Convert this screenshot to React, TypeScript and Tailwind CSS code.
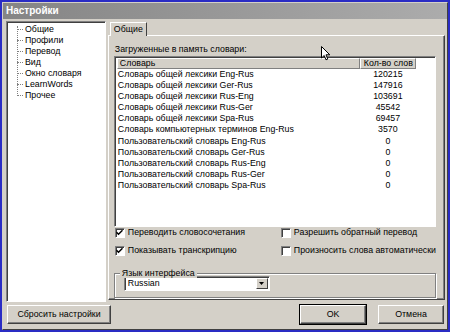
import React from "react";

// Settings dialog, classic Windows look

const TREE = ["Общие", "Профили", "Перевод", "Вид", "Окно словаря", "LearnWords", "Прочее"];

const DICTS: [string, string][] = [
  ["Словарь общей лексики Eng-Rus", "120215"],
  ["Словарь общей лексики Ger-Rus", "147916"],
  ["Словарь общей лексики Rus-Eng", "103691"],
  ["Словарь общей лексики Rus-Ger", "45542"],
  ["Словарь общей лексики Spa-Rus", "69457"],
  ["Словарь компьютерных терминов Eng-Rus", "3570"],
  ["Пользовательский словарь Eng-Rus", "0"],
  ["Пользовательский словарь Ger-Rus", "0"],
  ["Пользовательский словарь Rus-Eng", "0"],
  ["Пользовательский словарь Rus-Ger", "0"],
  ["Пользовательский словарь Spa-Rus", "0"],
];

function CheckBox({ checked, label }: { checked?: boolean; label: string }) {
  return (
    <div className="flex items-center gap-[3px] h-[12px] whitespace-nowrap">
      <div className="w-[10px] h-[10px] shrink-0 bg-white border border-t-[#808080] border-l-[#808080] border-b-white border-r-white flex items-center justify-center shadow-[inset_1px_1px_0_#404040]">
        {checked && (
          <svg width="7" height="7" viewBox="0 0 7 7">
            <path d="M0.5 3.2 L2.5 5.2 L6.5 1.2" stroke="#000" strokeWidth="1.5" fill="none" />
          </svg>
        )}
      </div>
      <span>{label}</span>
    </div>
  );
}

function Button({ children, width, bold }: { children: React.ReactNode; width: string; bold?: boolean }) {
  return (
    <div
      className={`${width} h-[19px] flex items-center justify-center bg-[#d4d0c8] border border-t-white border-l-white border-b-[#404040] border-r-[#404040] shadow-[inset_-1px_-1px_0_#808080] ${
        bold ? "outline outline-1 outline-black" : ""
      }`}
    >
      {children}
    </div>
  );
}

export default function App() {
  return (
    <div
      className="w-[450px] h-[332px] bg-[#2a2cc4] p-[2px] text-[8.8px] text-black leading-none relative"
      style={{ fontFamily: '"Liberation Sans", Arial, sans-serif' }}
    >
      <div className="w-full h-full bg-[#d4d0c8] border border-t-[#d4d0c8] border-l-[#d4d0c8] border-b-[#404040] border-r-[#404040] flex flex-col">
        {/* Title bar */}
        <div className="h-[16px] bg-gradient-to-r from-[#858585] to-[#acacac] flex items-center pl-[3px] text-white font-bold text-[10px]">
          Настройки
        </div>

        <div className="flex flex-1 pt-[2px] pl-[3px] pr-[2px] gap-[2px]">
          {/* Tree */}
          <div className="w-[104px] h-[281px] bg-white border border-t-[#808080] border-l-[#808080] border-b-white border-r-white shadow-[inset_1px_1px_0_#404040] pl-[10px] pt-[2px] relative">
            <div className="absolute left-[10px] top-[4px] h-[68px] border-l border-dotted border-[#808080]" />
            {TREE.map((t) => (
              <div key={t} className="flex items-center h-[11px] whitespace-nowrap">
                <div className="w-[6px] border-t border-dotted border-[#808080]" />
                <span className="ml-[2px]">{t}</span>
              </div>
            ))}
          </div>

          {/* Tabs */}
          <div className="flex flex-col flex-1">
            <div className="flex h-[14px] items-end pl-[2px]">
              <div className="h-[14px] px-[3px] flex items-center bg-[#d4d0c8] border-t border-l border-t-white border-l-white border-r border-r-[#404040] relative top-[1px] z-10">
                Общие
              </div>
            </div>
            <div className="h-[265px] border border-t-white border-l-white border-b-[#404040] border-r-[#404040] shadow-[inset_-1px_-1px_0_#808080] pl-[5px] pr-[8px] pt-[9px] flex flex-col">
              <div className="mb-[2px] pl-[1px] whitespace-nowrap">Загруженные в память словари:</div>
              {/* List view */}
              <div className="h-[171px] bg-white border border-t-[#808080] border-l-[#808080] border-b-white border-r-white shadow-[inset_1px_1px_0_#404040] p-[1px] pl-[2px]">
                <div className="flex h-[11px] whitespace-nowrap">
                  <div className="w-[243px] h-[11px] bg-[#d4d0c8] border border-t-white border-l-white border-b-[#808080] border-r-[#808080] flex items-center pl-[2px]">
                    Словарь
                  </div>
                  <div className="w-[56px] h-[11px] bg-[#d4d0c8] border border-t-white border-l-white border-b-[#808080] border-r-[#808080] flex items-center pl-[3px]">
                    Кол-во слов
                  </div>
                </div>
                <div>
                  {DICTS.map(([name, count]) => (
                    <div key={name} className="flex h-[11.1px] items-center whitespace-nowrap">
                      <div className="w-[243px] pl-[1px]">{name}</div>
                      <div className="w-[56px] text-center">{count}</div>
                    </div>
                  ))}
                </div>
              </div>

              <div className="grid grid-cols-[166px_1fr] gap-y-[6px] mt-0 pl-[1px]">
                <CheckBox checked label="Переводить словосочетания" />
                <CheckBox label="Разрешить обратный перевод" />
                <CheckBox checked label="Показывать транскрипцию" />
                <CheckBox label="Произносить слова автоматически" />
              </div>

              {/* Group box */}
              <div className="mt-[16px] h-[25px] border border-[#808080] shadow-[1px_1px_0_white,inset_1px_1px_0_white] relative pl-[9px] pt-[2px]">
                <span className="absolute left-[5px] top-[-5px] bg-[#d4d0c8] px-[2px] whitespace-nowrap">Язык интерфейса</span>
                <div className="w-[146px] h-[15px] bg-white border border-t-[#808080] border-l-[#808080] border-b-white border-r-white shadow-[inset_1px_1px_0_#404040] flex items-center justify-between pl-[3px] pr-[1px]">
                  <span>Russian</span>
                  <div className="w-[12px] h-[11px] bg-[#d4d0c8] border border-t-white border-l-white border-b-[#404040] border-r-[#404040] flex items-center justify-center">
                    <svg width="5" height="3" viewBox="0 0 5 3">
                      <path d="M0 0 H5 L2.5 3 Z" fill="#000" />
                    </svg>
                  </div>
                </div>
              </div>
            </div>
          </div>
        </div>

        {/* Bottom buttons */}
        <div className="flex items-center h-[27px] pl-[4px] pr-[3px] pb-[3px]">
          <Button width="w-[104px]">Сбросить настройки</Button>
          <div className="flex-1" />
          <Button width="w-[66px]" bold>
            OK
          </Button>
          <div className="w-[12px]" />
          <Button width="w-[66px]">Отмена</Button>
        </div>
      </div>

      {/* Mouse pointer */}
      <svg className="absolute left-[321px] top-[46px]" width="10" height="15" viewBox="0 0 10 15">
        <path d="M0.5 0.5 V12 L3.2 9.5 L5 13.8 L6.8 13 L5 8.8 H8.8 Z" fill="#fff" stroke="#000" strokeWidth="1" strokeLinejoin="miter" />
      </svg>
    </div>
  );
}
